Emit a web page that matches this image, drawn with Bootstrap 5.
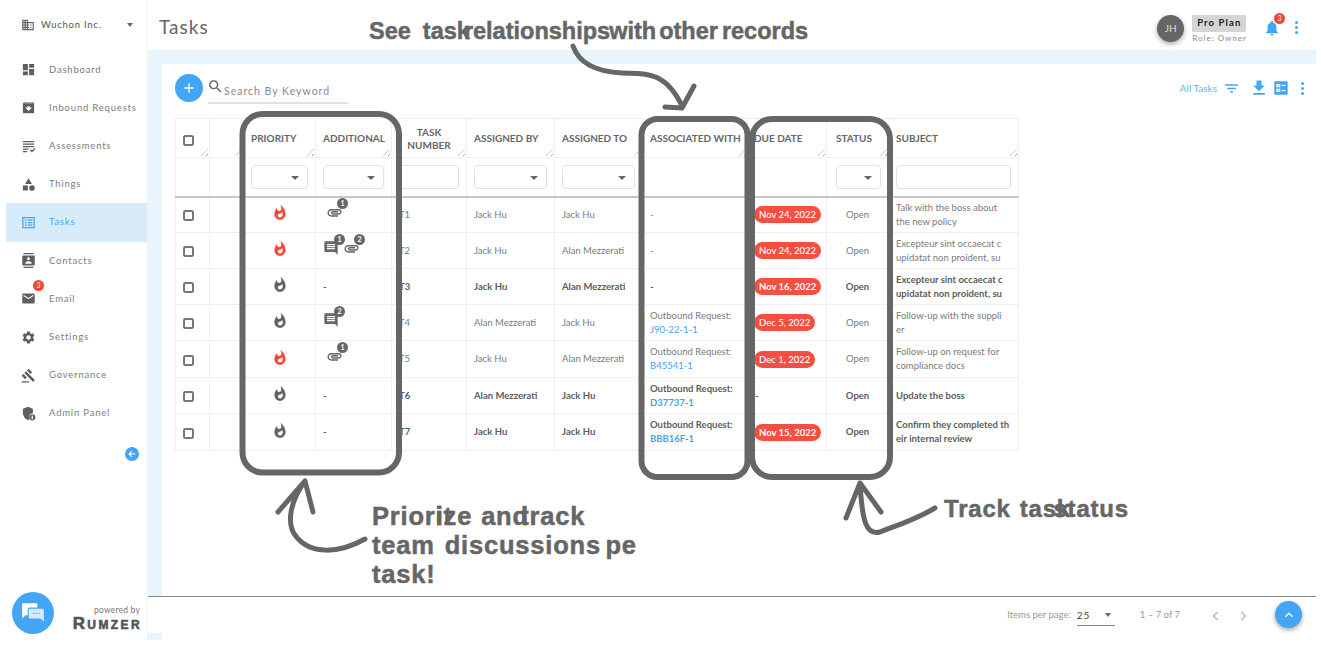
<!DOCTYPE html>
<html lang="en">
<head>
    <meta charset="UTF-8">
    <meta name="viewport" content="width=device-width, initial-scale=1.0">
    <title>Tasks</title>
    <link href="https://cdn.jsdelivr.net/npm/bootstrap@5.3.3/dist/css/bootstrap.min.css" rel="stylesheet">
    <script src="https://cdn.jsdelivr.net/npm/bootstrap@5.3.3/dist/js/bootstrap.bundle.min.js"></script>
    <style>
        body {
            margin: 0;
            width: 1321px;
            height: 652px;
            overflow: hidden;
            position: relative;
            background: #fff;
            font-family: Lato, "Liberation Sans", sans-serif;
            color: #777;
        }
        .shell { height: 640px; width: 1316px; }
        .side-bar { width: 148px; flex: none; border-right: 1px solid #f2f2f2; }
        .org-row { height: 50.6px; padding: 10px 14px 10px 21px; font-size: 9.5px; letter-spacing: .75px; color: #555; }
        .org-row svg { width: 14px; height: 14px; fill: #666; margin-right: 6px; }
        .caret-down { width: 0; height: 0; border: 3.5px solid transparent; border-top: 4px solid #666; border-bottom: 0; }
        .side-link { height: 38.2px; margin-left: 6px; padding: 0 0 0 15px; font-size: 9.5px; letter-spacing: .8px; color: #7d7d7d; position: relative; }
        .side-link svg { width: 15px; height: 15px; fill: #5f5f5f; margin-right: 13px; flex: none; }
        .side-link.on { background: #d8ebfb; color: #42a5f5; }
        .side-link.on svg { fill: #42a5f5; }
        .mail-count { position: absolute; left: 27px; top: 0; width: 11px; height: 11px; border-radius: 50%; background: #f44336; color: #fff; font-size: 7px; line-height: 11px; text-align: center; letter-spacing: 0; }
        .collapse-btn { width: 14px; height: 14px; border-radius: 50%; background: #42a5f5; margin: 15px 0 0 125px; }
        .collapse-btn svg { width: 10px; height: 10px; fill: #fff; }
        .side-foot { padding: 0 7px 6px 12px; }
        .chat-btn { width: 42px; height: 42px; border-radius: 50%; background: #42a5f5; }
        .chat-btn svg { width: 26px; height: 26px; }
        .brand-block { margin-bottom: 3px; }
        .powered { font-size: 8.5px; color: #777; line-height: 11px; letter-spacing: .2px; }
        .rumzer { font-family: "Liberation Sans", sans-serif; font-weight: 700; font-variant: small-caps; font-size: 17px; line-height: 15px; letter-spacing: 2.4px; margin-right: -2px; color: #555; -webkit-text-stroke: .6px #555; }
        .main-col { min-width: 0; }
        .top-bar { height: 50px; padding: 4px 0 0 11px; }
        .page-title { font-size: 19px; letter-spacing: 1px; color: #666; margin: 0; font-weight: 400; }
        .avatar { width: 27px; height: 27px; border-radius: 50%; background: #666; color: #ddd; font-size: 10px; box-shadow: 0 2px 5px rgba(0,0,0,.35); margin: 2px 8px 0 0; }
        .plan-wrap { margin-top: 5px; }
        .plan-box { width: 54px; height: 17px; background: #d5d5d5; color: #222; font-size: 9.5px; font-weight: 700; letter-spacing: 1.1px; border-radius: 1px; }
        .role-line { font-size: 8px; letter-spacing: 1px; color: #888; margin-top: 1px; line-height: 11px; }
        .bell-wrap { position: relative; margin: 2px 14px 0 16px; }
        .bell-wrap svg { width: 18px; height: 18px; fill: #42a5f5; display: block; }
        .bell-count { position: absolute; right: -4px; top: -6px; width: 11px; height: 11px; border-radius: 50%; background: #f44336; color: #fff; font-size: 7px; line-height: 11px; text-align: center; }
        .dots { width: 3px; display: flex; flex-direction: column; gap: 2px; }
        .dots i { width: 3px; height: 3px; border-radius: 50%; background: #42a5f5; display: block; }
        .top-bar .dots { margin-right: 18px; }
        .content-wrap { background: #e9f5fd; padding: 14px 0 0 14px; height: 590px; position: relative; }
        .work-panel { height: 100%; background: #fff; padding: 10px 12px 0 13px; }
        .tool-row { height: 44px; }
        .add-btn { width: 28px; height: 28px; border-radius: 50%; background: #42a5f5; color: #fff; flex: none; margin: 0 5px 0 0; }
        .add-btn svg { width: 16px; height: 16px; fill: #fff; }
        .search-box { width: 140px; height: 28px; border-bottom: 2px solid #e2e2e2; margin-top: 2px; color: #8a8a8a; font-size: 10.5px; letter-spacing: 1px; white-space: nowrap; }
        .search-box svg { width: 17px; height: 17px; fill: #666; margin: 0 0 6px -1px; flex: none; }
        .search-box span { padding-top: 6px; }
        .tool-end { padding-top: 4px; }
        .all-tasks { color: #64b5f6; font-size: 10px; margin-right: 6px; }
        .tool-filter { width: 17px; height: 17px; fill: #42a5f5; margin-right: 9px; }
        .tool-down { width: 20px; height: 20px; fill: #42a5f5; margin-right: 3.5px; }
        .tool-board { width: 16px; height: 16px; fill: #42a5f5; margin-right: 12.5px; }
        .task-table { table-layout: fixed; width: 843px; border-left: 1px solid #eee; border-top: 1px solid #eee; font-size: 9.5px; color: #7a7a7a; margin: 0; }
        .task-table > :not(caption) > * > * { padding: 0 7px; border-bottom: 1px solid #eee; border-right: 1px solid #f0f0f0; vertical-align: middle; line-height: 14px; box-shadow: none; color: inherit; }
        .task-table col:nth-child(1), .task-table col:nth-child(2) { width: 34px; }
        .task-table col:nth-child(3) { width: 72px; }
        .task-table col:nth-child(4) { width: 76px; }
        .task-table col:nth-child(5) { width: 75px; }
        .task-table col:nth-child(6), .task-table col:nth-child(7) { width: 88px; }
        .task-table col:nth-child(8) { width: 105px; }
        .task-table col:nth-child(9) { width: 79px; }
        .task-table col:nth-child(10) { width: 62px; }
        .task-table col:nth-child(11) { width: 130px; }
        .task-table thead tr:first-child > * { height: 39px; position: relative; padding-top: 2px; font-size: 10px; font-weight: 700; color: #666; text-transform: uppercase; line-height: 13.5px; }
        .task-table thead tr:first-child > *::after { content: ""; position: absolute; right: 1px; bottom: 1px; width: 7px; height: 7px; background: repeating-linear-gradient(135deg, transparent 0 1.5px, #999 1.5px 2.2px, transparent 2.2px 3.4px); clip-path: polygon(100% 0, 100% 100%, 0 100%); }
        .task-table thead tr:last-child > * { height: 39px; border-bottom: 2px solid #c8c8c8; }
        .task-table > thead > tr > .th-due { padding-left: 6px; }
        .task-table > thead > tr > .th-status { padding-left: 9px; }
        .task-table .th-wide { white-space: nowrap; }
        .task-table tbody td { height: 36px; }
        .task-table tbody tr:nth-child(5) td { height: 37px; }
        .task-table tbody tr:last-child td { height: 37px; }
        .task-table tr.unread td { font-weight: 700; color: #5c5c5c; }
        .tick { width: 11px; height: 11px; margin: 2px 0 0 0; border: 2px solid #777; border-radius: 1px; display: block; background: #fff; }
        .fbox { height: 24px; min-height: 24px; padding: 0; border: 1px solid #e2e2e2; border-radius: 4px; position: relative; }
        .fbox.drop::after { content: ""; position: absolute; right: 8px; top: 10px; border: 4px solid transparent; border-top: 4px solid #666; border-bottom: 0; }
        .flame { width: 16px; height: 16px; display: block; margin: 0 auto 3px; fill: #5f5f5f; stroke: #5f5f5f; stroke-width: .7px; }
        .flame.hot { fill: #f44336; stroke: #f44336; }
        .extra-cell { display: flex; align-items: center; height: 20px; margin-bottom: 7px; }
        .extra-item { position: relative; width: 16px; margin-right: 1px; height: 15px; }
        .extra-item svg { width: 16px; height: 16px; fill: #666; display: block; }
        .extra-item.clip { margin-left: 3px; margin-right: 0; }
        .extra-item.clip svg { width: 17px; height: 17px; }
        .tiny-count { position: absolute; right: -6px; top: -6px; width: 11px; height: 11px; border-radius: 50%; background: #666; color: #fff; font-size: 7px; line-height: 11px; text-align: center; font-weight: 700; }
        .due-pill { background: #f44f42; color: #fff; font-size: 9.5px; font-weight: 500; padding: 3px 5px; line-height: 11px; border-radius: 9px; margin-left: -1px; display: inline-block; white-space: nowrap; }
        tr.unread .due-pill { font-weight: 700; }
        .rec-link { color: #4a9fee; text-decoration: none; }
        .pager-bar { position: absolute; left: 0; right: 0; bottom: 7px; height: 37px; background: #fff; border-top: 1px solid #888; padding: 1px 14px 0 0; font-size: 9.5px; color: #999; }
        .page-size { width: 38px; height: 21px; margin: 0 25px 0 6px; border-bottom: 1px solid #888; color: #444; font-size: 10px; letter-spacing: 1px; padding: 0 4px 0 0; }
        .page-chev { width: 14px; height: 14px; fill: none; stroke: #aaa; stroke-width: 2; margin-left: 13px; }
        .page-chev.first { margin-left: 29px; }
        .up-btn { width: 27px; height: 27px; border-radius: 50%; background: #42a5f5; box-shadow: 0 2px 5px rgba(0,0,0,.35); margin: -2px 0 0 25px; }
        .up-btn svg { width: 14px; height: 14px; fill: none; stroke: #fff; stroke-width: 2.4; }
        .mark-layer { position: absolute; left: 0; top: 0; width: 1321px; height: 652px; pointer-events: none; }
        .mark-layer rect, .mark-layer path { fill: none; stroke: #666; stroke-linecap: round; stroke-linejoin: round; }
        .note { position: absolute; font-family: "Liberation Sans", Arial, sans-serif; font-weight: 700; color: #666; -webkit-text-stroke: .5px #666; white-space: nowrap; line-height: 29px; }
        .note-top { left: 369px; top: 17px; font-size: 23.5px; }
        .note-left { left: 372px; top: 502px; font-size: 25.5px; letter-spacing: .8px; }
        .note-right { left: 944px; top: 494px; font-size: 24px; letter-spacing: .8px; }
        .note b { font-weight: 700; display: inline-block; }
        .gap-see { margin-left: 12px; }
        .gap-rel { margin-left: -6px; }
        .gap-with { margin-left: -1px; }
        .gap-other { margin-left: 3px; }
        .gap-rec { margin-left: 4px; }
        .gap-ize { margin-left: -17px; }
        .gap-and { margin-left: 9px; }
        .gap-track { margin-left: -8.7px; }
        .gap-disc { margin-left: 10px; }
        .gap-pe { margin-left: 4.5px; }
        .gap-task { margin-left: 9px; }
        .gap-status { margin-left: -17.5px; }
    </style>
</head>
<body>
    <svg width="0" height="0" class="position-absolute">
        <symbol id="i-domain" viewBox="0 0 24 24"><path d="M12 7V3H2v18h20V7H12zM6 19H4v-2h2v2zm0-4H4v-2h2v2zm0-4H4V9h2v2zm0-4H4V5h2v2zm4 12H8v-2h2v2zm0-4H8v-2h2v2zm0-4H8V9h2v2zm0-4H8V5h2v2zm10 12h-8v-2h2v-2h-2v-2h2v-2h-2V9h8v10zm-2-8h-2v2h2v-2zm0 4h-2v2h2v-2z"/></symbol>
        <symbol id="i-dash" viewBox="0 0 24 24"><path d="M3 13h8V3H3v10zm0 8h8v-6H3v6zm10 0h8V11h-8v10zm0-18v6h8V3h-8z"/></symbol>
        <symbol id="i-inbound" viewBox="0 0 24 24"><path d="M20.54 5.23l-1.39-1.68C18.88 3.21 18.47 3 18 3H6c-.47 0-.88.21-1.16.55L3.46 5.23C3.17 5.57 3 6.02 3 6.5V19c0 1.1.9 2 2 2h14c1.1 0 2-.9 2-2V6.5c0-.48-.17-.93-.46-1.27zM12 17.5L6.5 12H10v-2h4v2h3.5L12 17.5zM5.12 5l.81-1h12l.94 1H5.12z"/></symbol>
        <symbol id="i-assess" viewBox="0 0 24 24"><path d="M3 3h18v2H3zM3 7h18v2H3zM3 11h18v2H3zM3 15h9v2H3zM3 19h7v2H3zM14 18l1.5-1.5 2 2 4-4L23 16l-5.500 5.500z"/></symbol>
        <symbol id="i-things" viewBox="0 0 24 24"><path d="M12 2l-5.500 9h11z"/><circle cx="17.500" cy="17.500" r="4.500"/><path d="M3 13.500h8v8H3z"/></symbol>
        <symbol id="i-tasks" viewBox="0 0 24 24"><path d="M2 3h20v18H2zm2 2v14h16V5zm2 2h3v2H6zm5 0h7v2h-7zm-5 4h3v2H6zm5 0h7v2h-7zm-5 4h3v2H6zm5 0h7v2h-7z" fill-rule="evenodd"/></symbol>
        <symbol id="i-contacts" viewBox="0 0 24 24"><path d="M20 0H4v2h16V0zM4 24h16v-2H4v2zM20 4H4c-1.100 0-2 .9-2 2v12c0 1.100.9 2 2 2h16c1.100 0 2-.9 2-2V6c0-1.100-.9-2-2-2zm-8 2.750c1.240 0 2.250 1.010 2.250 2.250s-1.010 2.250-2.250 2.250S9.750 10.240 9.750 9 10.760 6.750 12 6.750zM17 17H7v-1.500c0-1.670 3.330-2.500 5-2.500s5 .83 5 2.500V17z"/></symbol>
        <symbol id="i-mail" viewBox="0 0 24 24"><path d="M20 4H4c-1.100 0-2 .9-2 2v12c0 1.100.9 2 2 2h16c1.100 0 2-.9 2-2V6c0-1.100-.9-2-2-2zm0 4l-8 5-8-5V6l8 5 8-5v2z"/></symbol>
        <symbol id="i-gear" viewBox="0 0 24 24"><path d="M19.140 12.940c.04-.3.06-.61.06-.94 0-.32-.02-.64-.07-.94l2.030-1.580c.18-.14.23-.41.12-.61l-1.920-3.320c-.12-.22-.37-.29-.59-.22l-2.390.96c-.5-.38-1.030-.7-1.620-.94l-.36-2.540c-.04-.24-.24-.41-.48-.41h-3.840c-.24 0-.43.17-.47.41l-.36 2.540c-.59.24-1.130.57-1.620.94l-2.390-.96c-.22-.08-.47 0-.59.22L2.740 8.870c-.12.21-.08.47.12.61l2.030 1.580c-.05.3-.09.63-.09.94s.02.64.07.94l-2.030 1.580c-.18.14-.23.41-.12.61l1.920 3.320c.12.22.37.29.59.22l2.390-.96c.5.38 1.030.7 1.620.94l.36 2.540c.05.24.24.41.48.41h3.840c.24 0 .44-.17.47-.41l.36-2.540c.59-.24 1.130-.56 1.620-.94l2.390.96c.22.08.47 0 .59-.22l1.920-3.320c.12-.22.07-.47-.12-.61l-2.010-1.580zM12 15.600c-1.980 0-3.600-1.620-3.600-3.600s1.620-3.600 3.600-3.600 3.600 1.620 3.600 3.600-1.620 3.600-3.600 3.600z"/></symbol>
        <symbol id="i-gavel" viewBox="0 0 24 24"><path d="M1 21h12v2H1zM5.245 8.070l2.830-2.827 14.140 14.142-2.828 2.828zM12.317 1l5.657 5.656-2.830 2.830-5.654-5.660zM3.825 9.485l5.657 5.657-2.828 2.828-5.657-5.657z"/></symbol>
        <symbol id="i-shield" viewBox="0 0 24 24"><path d="M11 1L3 4.500v6c0 5.500 3.500 10.700 8 12 .8-.2 1.600-.6 2.300-1.100A6.500 6.500 0 0 1 19 11.600V4.500z"/><circle cx="18" cy="18" r="5"/><path d="M17 15h2v6h-2z" fill="#fff"/></symbol>
        <symbol id="i-flame" viewBox="0 0 24 24"><path d="M13.500.67s.74 2.650.74 4.800c0 2.060-1.350 3.730-3.410 3.730-2.070 0-3.630-1.670-3.630-3.730l.03-.36C5.210 7.510 4 10.620 4 14c0 4.420 3.580 8 8 8s8-3.580 8-8C20 8.610 17.410 3.800 13.500.67zM11.710 19c-1.780 0-3.220-1.400-3.220-3.140 0-1.620 1.050-2.760 2.810-3.120 1.770-.36 3.600-1.210 4.620-2.580.39 1.290.59 2.650.59 4.040 0 2.650-2.150 4.800-4.800 4.800z"/></symbol>
        <symbol id="i-clip" viewBox="0 0 24 24"><path d="M2 12.500C2 9.460 4.460 7 7.500 7H18c2.210 0 4 1.790 4 4s-1.790 4-4 4H9.500C8.120 15 7 13.880 7 12.500S8.120 10 9.500 10H17v2H9.410c-.55 0-.55 1 0 1H18c1.100 0 2-.9 2-2s-.9-2-2-2H7.500C5.570 9 4 10.570 4 12.500S5.570 16 7.500 16H17v2H7.500C4.460 18 2 15.540 2 12.500z"/></symbol>
        <symbol id="i-note" viewBox="0 0 24 24"><path d="M20 2H4c-1.100 0-2 .9-2 2v12c0 1.100.9 2 2 2h14l4 4V4c0-1.100-.9-2-2-2zm-2 12H6v-2h12v2zm0-3H6V9h12v2zm0-3H6V6h12v2z"/></symbol>
        <symbol id="i-search" viewBox="0 0 24 24"><path d="M15.500 14h-.79l-.28-.27C15.410 12.590 16 11.110 16 9.500 16 5.910 13.090 3 9.500 3S3 5.910 3 9.500 5.910 16 9.500 16c1.610 0 3.090-.59 4.230-1.570l.27.28v.79l5 4.990L20.490 19l-4.990-5zm-6 0C7.010 14 5 11.990 5 9.500S7.010 5 9.500 5 14 7.010 14 9.500 11.990 14 9.500 14z"/></symbol>
    </svg>

    <div class="shell d-flex">
        <aside class="side-bar d-flex flex-column">
            <div class="org-row d-flex align-items-center">
                <svg><use href="#i-domain"/></svg>
                <span class="flex-grow-1">Wuchon Inc.</span>
                <span class="caret-down"></span>
            </div>
            <nav class="nav flex-column">
                <a class="side-link d-flex align-items-center text-decoration-none"><svg><use href="#i-dash"/></svg>Dashboard</a>
                <a class="side-link d-flex align-items-center text-decoration-none"><svg><use href="#i-inbound"/></svg>Inbound Requests</a>
                <a class="side-link d-flex align-items-center text-decoration-none"><svg><use href="#i-assess"/></svg>Assessments</a>
                <a class="side-link d-flex align-items-center text-decoration-none"><svg><use href="#i-things"/></svg>Things</a>
                <a class="side-link on d-flex align-items-center text-decoration-none"><svg><use href="#i-tasks"/></svg>Tasks</a>
                <a class="side-link d-flex align-items-center text-decoration-none"><svg><use href="#i-contacts"/></svg>Contacts</a>
                <a class="side-link d-flex align-items-center text-decoration-none"><svg><use href="#i-mail"/></svg>Email<span class="mail-count">3</span></a>
                <a class="side-link d-flex align-items-center text-decoration-none"><svg><use href="#i-gear"/></svg>Settings</a>
                <a class="side-link d-flex align-items-center text-decoration-none"><svg><use href="#i-gavel"/></svg>Governance</a>
                <a class="side-link d-flex align-items-center text-decoration-none"><svg><use href="#i-shield"/></svg>Admin Panel</a>
            </nav>
            <div class="collapse-btn d-flex align-items-center justify-content-center">
                <svg viewBox="0 0 24 24"><path d="M20 11H8l5-5-2-2-8 8 8 8 2-2-5-5h12z"/></svg>
            </div>
            <div class="side-foot mt-auto d-flex justify-content-between align-items-end">
                <div class="chat-btn d-flex align-items-center justify-content-center">
                    <svg viewBox="0 0 24 24"><path d="M2 3h13a1 1 0 0 1 1 1v3H9a2 2 0 0 0-2 2v5H5l-3 3V4a1 1 0 0 1 0-1z" fill="#fff"/><path d="M9 8h12a1 1 0 0 1 1 1v11l-3-3H9a1 1 0 0 1-1-1V9a1 1 0 0 1 1-1z" fill="#d5eafc"/><path d="M12 12.500h1.200M14.500 12.500h1.200M17 12.500h1.200" stroke="#42a5f5" stroke-width="1"/></svg>
                </div>
                <div class="brand-block text-end">
                    <div class="powered">powered by</div>
                    <div class="rumzer">Rumzer</div>
                </div>
            </div>
        </aside>

        <main class="main-col flex-grow-1 d-flex flex-column">
            <header class="top-bar d-flex align-items-center">
                <h1 class="page-title flex-grow-1">Tasks</h1>
                <div class="avatar d-flex align-items-center justify-content-center">JH</div>
                <div class="plan-wrap">
                    <div class="plan-box d-flex align-items-center justify-content-center">Pro Plan</div>
                    <div class="role-line">Role: Owner</div>
                </div>
                <div class="bell-wrap">
                    <svg viewBox="0 0 24 24"><path d="M12 22c1.100 0 2-.9 2-2h-4c0 1.100.89 2 2 2zm6-6v-5c0-3.070-1.640-5.640-4.500-6.320V4c0-.83-.67-1.500-1.500-1.500s-1.500.67-1.500 1.500v.68C7.630 5.360 6 7.920 6 11v5l-2 2v1h16v-1l-2-2z"/></svg>
                    <span class="bell-count">3</span>
                </div>
                <div class="dots"><i></i><i></i><i></i></div>
            </header>

            <div class="content-wrap">
                <div class="work-panel">
                    <div class="tool-row d-flex align-items-start">
                        <div class="add-btn d-flex align-items-center justify-content-center">
                            <svg viewBox="0 0 24 24"><path d="M19 13h-6v6h-2v-6H5v-2h6V5h2v6h6v2z"/></svg>
                        </div>
                        <div class="search-box d-flex align-items-center">
                            <svg><use href="#i-search"/></svg><span>Search By Keyword</span>
                        </div>
                        <div class="tool-end ms-auto d-flex align-items-center">
                            <span class="all-tasks">All Tasks</span>
                            <svg class="tool-filter" viewBox="0 0 24 24"><path d="M10 18h4v-2h-4v2zM3 6v2h18V6H3zm3 7h12v-2H6v2z"/></svg>
                            <svg class="tool-down" viewBox="0 0 24 24"><path d="M19 9h-4V3H9v6H5l7 7 7-7zM5 18v2h14v-2H5z"/></svg>
                            <svg class="tool-board" viewBox="0 0 24 24"><path fill-rule="evenodd" d="M3 2h18a1 1 0 0 1 1 1v18a1 1 0 0 1-1 1H3a1 1 0 0 1-1-1V3a1 1 0 0 1 1-1zm2 4v5h6V6zm2 2h2v1H7zM5 13v5h6v-5zm2 2h2v1H7zm6-8v2h6V7zm0 8v2h6v-2z"/></svg>
                            <div class="dots"><i></i><i></i><i></i></div>
                        </div>
                    </div>

                    <table class="table task-table">
                        <colgroup>
                            <col><col><col><col><col><col><col><col><col><col><col>
                        </colgroup>
                        <thead>
                            <tr>
                                <th><input type="checkbox" class="tick form-check-input"></th>
                                <th></th>
                                <th>Priority</th>
                                <th>Additional</th>
                                <th class="text-center">Task Number</th>
                                <th>Assigned By</th>
                                <th>Assigned To</th>
                                <th class="th-wide">Associated With</th>
                                <th class="th-due">Due Date</th>
                                <th class="th-status">Status</th>
                                <th>Subject</th>
                            </tr>
                            <tr>
                                <th></th><th></th>
                                <th><div class="form-control fbox drop"></div></th>
                                <th><div class="form-control fbox drop"></div></th>
                                <th><div class="form-control fbox"></div></th>
                                <th><div class="form-control fbox drop"></div></th>
                                <th><div class="form-control fbox drop"></div></th>
                                <th></th><th></th>
                                <th class="th-status"><div class="form-control fbox drop"></div></th>
                                <th><div class="form-control fbox"></div></th>
                            </tr>
                        </thead>
                        <tbody>
                            <tr>
                                <td><input type="checkbox" class="tick form-check-input"></td><td></td>
                                <td><svg class="flame hot"><use href="#i-flame"/></svg></td>
                                <td><div class="extra-cell"><div class="extra-item clip"><svg><use href="#i-clip"/></svg><span class="tiny-count">1</span></div></div></td>
                                <td>T1</td><td>Jack Hu</td><td>Jack Hu</td><td>-</td>
                                <td><span class="due-pill">Nov 24, 2022</span></td>
                                <td class="text-center">Open</td>
                                <td>Talk with the boss about<br>the new policy</td>
                            </tr>
                            <tr>
                                <td><input type="checkbox" class="tick form-check-input"></td><td></td>
                                <td><svg class="flame hot"><use href="#i-flame"/></svg></td>
                                <td><div class="extra-cell"><div class="extra-item"><svg><use href="#i-note"/></svg><span class="tiny-count">1</span></div><div class="extra-item clip"><svg><use href="#i-clip"/></svg><span class="tiny-count">2</span></div></div></td>
                                <td>T2</td><td>Jack Hu</td><td>Alan Mezzerati</td><td>-</td>
                                <td><span class="due-pill">Nov 24, 2022</span></td>
                                <td class="text-center">Open</td>
                                <td>Excepteur sint occaecat c<br>upidatat non proident, su</td>
                            </tr>
                            <tr class="unread">
                                <td><input type="checkbox" class="tick form-check-input"></td><td></td>
                                <td><svg class="flame"><use href="#i-flame"/></svg></td>
                                <td>-</td>
                                <td>T3</td><td>Jack Hu</td><td>Alan Mezzerati</td><td>-</td>
                                <td><span class="due-pill">Nov 16, 2022</span></td>
                                <td class="text-center">Open</td>
                                <td>Excepteur sint occaecat c<br>upidatat non proident, su</td>
                            </tr>
                            <tr>
                                <td><input type="checkbox" class="tick form-check-input"></td><td></td>
                                <td><svg class="flame"><use href="#i-flame"/></svg></td>
                                <td><div class="extra-cell"><div class="extra-item"><svg><use href="#i-note"/></svg><span class="tiny-count">2</span></div></div></td>
                                <td>T4</td><td>Alan Mezzerati</td><td>Jack Hu</td>
                                <td>Outbound Request:<br><a class="rec-link">J90-22-1-1</a></td>
                                <td><span class="due-pill">Dec 5, 2022</span></td>
                                <td class="text-center">Open</td>
                                <td>Follow-up with the suppli<br>er</td>
                            </tr>
                            <tr>
                                <td><input type="checkbox" class="tick form-check-input"></td><td></td>
                                <td><svg class="flame hot"><use href="#i-flame"/></svg></td>
                                <td><div class="extra-cell"><div class="extra-item clip"><svg><use href="#i-clip"/></svg><span class="tiny-count">1</span></div></div></td>
                                <td>T5</td><td>Jack Hu</td><td>Alan Mezzerati</td>
                                <td>Outbound Request:<br><a class="rec-link">B45541-1</a></td>
                                <td><span class="due-pill">Dec 1, 2022</span></td>
                                <td class="text-center">Open</td>
                                <td>Follow-up on request for<br>compliance docs</td>
                            </tr>
                            <tr class="unread">
                                <td><input type="checkbox" class="tick form-check-input"></td><td></td>
                                <td><svg class="flame"><use href="#i-flame"/></svg></td>
                                <td>-</td>
                                <td>T6</td><td>Alan Mezzerati</td><td>Jack Hu</td>
                                <td>Outbound Request:<br><a class="rec-link">D37737-1</a></td>
                                <td>-</td>
                                <td class="text-center">Open</td>
                                <td>Update the boss</td>
                            </tr>
                            <tr class="unread">
                                <td><input type="checkbox" class="tick form-check-input"></td><td></td>
                                <td><svg class="flame"><use href="#i-flame"/></svg></td>
                                <td>-</td>
                                <td>T7</td><td>Jack Hu</td><td>Jack Hu</td>
                                <td>Outbound Request:<br><a class="rec-link">BBB16F-1</a></td>
                                <td><span class="due-pill">Nov 15, 2022</span></td>
                                <td class="text-center">Open</td>
                                <td>Confirm they completed th<br>eir internal review</td>
                            </tr>
                        </tbody>
                    </table>
                </div>

                <div class="pager-bar d-flex align-items-center justify-content-end">
                    <span>Items per page:</span>
                    <div class="page-size d-flex align-items-center justify-content-between"><span>25</span><span class="caret-down"></span></div>
                    <span>1 – 7 of 7</span>
                    <svg class="page-chev first" viewBox="0 0 24 24"><path d="M15 5l-7 7 7 7"/></svg>
                    <svg class="page-chev" viewBox="0 0 24 24"><path d="M9 5l7 7-7 7"/></svg>
                    <div class="up-btn d-flex align-items-center justify-content-center">
                        <svg viewBox="0 0 24 24"><path d="M6 15l6-6 6 6"/></svg>
                    </div>
                </div>
            </div>
        </main>
    </div>

    <svg class="mark-layer" viewBox="0 0 1321 652">
        <rect x="242.500" y="114" width="156.500" height="358.500" rx="20" stroke-width="6"/>
        <rect x="641.500" y="119" width="106" height="358" rx="16" stroke-width="6"/>
        <rect x="752" y="119" width="138" height="358" rx="20" stroke-width="6"/>
        <path stroke-width="5" d="M573 46C580 66 600 72 622 73C640 74 664 68 682 106M665 107L682 108L694 86"/>
        <path stroke-width="5" d="M365 539C340 553 310 556 295 535C286 522 291 500 305 481M278 512L305 481L313 512"/>
        <path stroke-width="5" d="M935 508C915 520 895 526 880 532C866 536 862 520 860 483M846 518L860 483L881 512"/>
    </svg>
    <div class="note note-top">See<b class="gap-see">task</b><b class="gap-rel">relationships</b><b class="gap-with">with</b><b class="gap-other">other</b><b class="gap-rec">records</b></div>
    <div class="note note-left">Priorit<b class="gap-ize">ize</b><b class="gap-and">and</b><b class="gap-track">track</b><br>team<b class="gap-disc">discussions</b><b class="gap-pe">pe</b><br>task!</div>
    <div class="note note-right">Track<b class="gap-task">task</b><b class="gap-status">status</b></div>
</body>
</html>
